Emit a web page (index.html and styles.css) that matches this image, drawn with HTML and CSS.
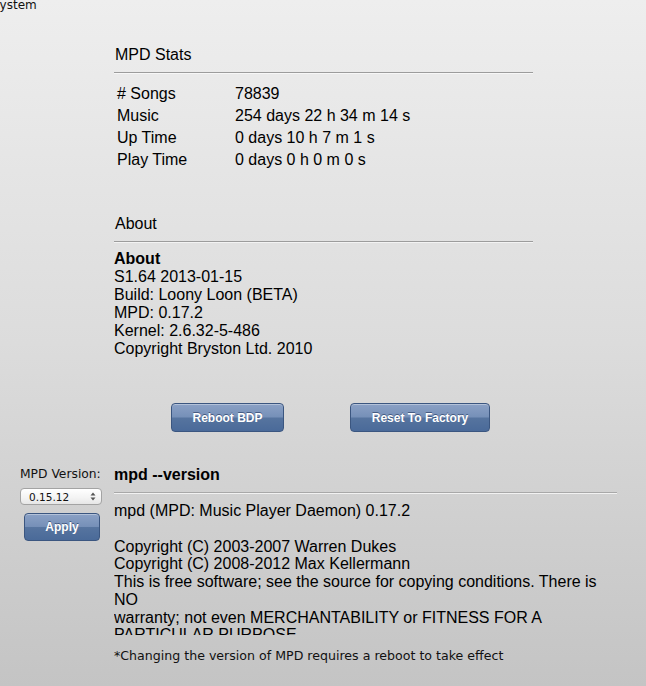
FILE: index.html
```html
<!DOCTYPE html>
<html>
<head>
<meta charset="utf-8">
<title>System</title>
<link rel="stylesheet" href="styles.css">
</head>
<body>
<div class="page">
  <div class="topbar">System</div>

  <section class="section stats">
    <h2 class="section-title">MPD Stats</h2>
    <div class="stats-grid">
      <div># Songs</div><div>78839</div>
      <div>Music</div><div>254 days 22 h 34 m 14 s</div>
      <div>Up Time</div><div>0 days 10 h 7 m 1 s</div>
      <div>Play Time</div><div>0 days 0 h 0 m 0 s</div>
    </div>
  </section>

  <section class="section about">
    <h2 class="section-title">About</h2>
    <div class="about-body">
      <div class="about-head">About</div>
      <div>S1.64 2013-01-15</div>
      <div>Build: Loony Loon (BETA)</div>
      <div>MPD: 0.17.2</div>
      <div>Kernel: 2.6.32-5-486</div>
      <div>Copyright Bryston Ltd. 2010</div>
    </div>
  </section>

  <div class="actions">
    <button class="btn btn-reboot">Reboot BDP</button>
    <button class="btn btn-reset">Reset To Factory</button>
  </div>

  <div class="version-row">
    <aside class="version-side">
      <div class="side-label">MPD Version:</div>
      <div class="fake-select">
        <span>0.15.12</span>
        <svg width="6" height="9" viewBox="0 0 6 9"><path d="M3 0.5 L5.5 3.5 L0.5 3.5 Z" fill="#555"/><path d="M3 8.5 L5.5 5.5 L0.5 5.5 Z" fill="#555"/></svg>
      </div>
      <button class="btn btn-apply">Apply</button>
    </aside>
    <div class="version-main">
      <h2 class="version-title">mpd --version</h2>
      <div class="version-output">
        <div>mpd (MPD: Music Player Daemon) 0.17.2</div>
        <div>&nbsp;</div>
        <div>Copyright (C) 2003-2007 Warren Dukes</div>
        <div>Copyright (C) 2008-2012 Max Kellermann</div>
        <div>This is free software; see the source for copying conditions. There is<br>NO</div>
        <div>warranty; not even MERCHANTABILITY or FITNESS FOR A</div>
        <div>PARTICULAR PURPOSE.</div>
      </div>
      <p class="footnote">*Changing the version of MPD requires a reboot to take effect</p>
    </div>
  </div>
</div>
</body>
</html>
```

FILE: styles.css
```css
html, body {
  margin: 0;
  padding: 0;
}

body {
  width: 646px;
  height: 686px;
  overflow: hidden;
  background: linear-gradient(to bottom, #eeeeee 0%, #dcdcdc 50%, #c4c4c4 100%);
  font-family: "Liberation Sans", Arial, Helvetica, sans-serif;
  color: #000;
}

.page {
  width: 646px;
}

.topbar {
  font-family: "DejaVu Sans", sans-serif;
  font-size: 12px;
  line-height: 14px;
  margin-top: -2px;
  margin-left: -8px;
  color: #111;
}

.section {
  margin-left: 114px;
  width: 419px;
}

.section-title {
  margin: 0;
  font-size: 16px;
  line-height: 18px;
  font-weight: normal;
  padding-bottom: 8px;
  padding-left: 1px;
  border-bottom: 1px solid #9c9c9c;
  box-shadow: 0 1px 0 rgba(255, 255, 255, 0.6);
}

.stats {
  margin-top: 34px;
}

.stats-grid {
  display: grid;
  grid-template-columns: 118px 1fr;
  margin-top: 10px;
  padding-left: 3px;
  font-size: 16px;
  line-height: 22px;
}

.about {
  margin-top: 44px;
}

.about-body {
  margin-top: 8px;
  font-size: 16px;
  line-height: 18px;
}

.about-head {
  font-weight: bold;
}

.actions {
  display: flex;
  gap: 66px;
  margin-top: 45px;
  padding-left: 171px;
}

.btn {
  font-family: "Liberation Sans", Arial, sans-serif;
  font-weight: bold;
  font-size: 12px;
  color: #fff;
  text-shadow: 0 -1px 0 rgba(20, 40, 80, 0.55);
  border: 1px solid #3b5680;
  border-radius: 4px;
  background: linear-gradient(to bottom, #8ba1c5 0%, #7690b8 48%, #56749f 52%, #4a6a99 100%);
  box-shadow: inset 0 1px 0 rgba(255, 255, 255, 0.35);
  padding: 0;
  margin: 0;
  display: flex;
  align-items: center;
  justify-content: center;
}

.btn-reboot {
  width: 113px;
  height: 29px;
}

.btn-reset {
  width: 140px;
  height: 29px;
}

.version-row {
  display: flex;
  margin-top: 34px;
}

.version-side {
  width: 114px;
  flex: none;
}

.side-label {
  font-family: "DejaVu Sans", sans-serif;
  font-size: 12.3px;
  line-height: 14px;
  padding-top: 1px;
  padding-left: 20px;
  color: #111;
}

.fake-select {
  margin-top: 7px;
  margin-left: 20px;
  width: 82px;
  height: 17px;
  box-sizing: border-box;
  border: 1px solid #a3a3a3;
  border-radius: 4px;
  background: linear-gradient(to bottom, #ffffff 0%, #f3f3f3 60%, #e6e6e6 100%);
  display: flex;
  align-items: center;
  justify-content: space-between;
  padding: 0 5px 0 8px;
  font-family: "DejaVu Sans", sans-serif;
  font-size: 10.5px;
  color: #111;
}

.btn-apply {
  margin-top: 8px;
  margin-left: 24px;
  width: 76px;
  height: 28px;
}

.version-main {
  width: 503px;
}

.version-title {
  margin: 0;
  font-size: 16px;
  line-height: 18px;
  font-weight: bold;
  padding-bottom: 8px;
  border-bottom: 1px solid #a8a8a8;
  box-shadow: 0 1px 0 rgba(255, 255, 255, 0.7);
}

.version-output {
  margin-top: 9px;
  height: 133px;
  overflow: hidden;
  font-size: 16px;
  line-height: 17.75px;
}

.footnote {
  margin: 14px 0 0 0;
  font-family: "DejaVu Sans", sans-serif;
  font-size: 12.6px;
  line-height: 14px;
  color: #111;
}
```
